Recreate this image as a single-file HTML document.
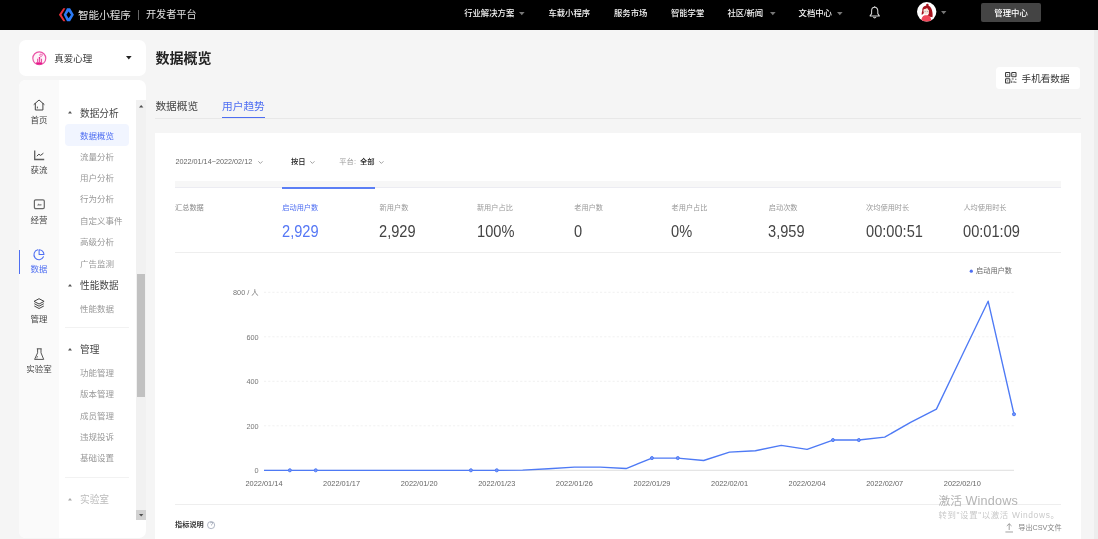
<!DOCTYPE html>
<html lang="zh-CN"><head><meta charset="utf-8"><title>数据概览</title>
<style>
*{box-sizing:border-box;margin:0;padding:0}
html,body{width:1098px;height:539px;overflow:hidden;background:#f5f5f5;font-family:"Liberation Sans","Noto Sans CJK SC",sans-serif;}
#root{position:relative;width:1098px;height:539px;overflow:hidden;will-change:transform}
.t{position:absolute;white-space:nowrap;line-height:1;transform:translateY(-50%)}
.b{position:absolute}
svg{position:absolute;overflow:visible}
</style></head><body><div id="root">

<div class="b" style="left:0;top:0;width:1098px;height:30px;background:#000"></div>
<svg style="left:58px;top:7.6px" width="17" height="13.6" viewBox="0 0 17 15" preserveAspectRatio="none">
<path d="M5.3 0.3 L0.9 7.5 L5.3 14.7 L7.4 14.7 L3.5 7.5 L7.4 0.3 Z" fill="#e8303a"/>
<path d="M9 0.3 H12.1 L15.9 7.5 L12.1 14.7 H9 L5.7 7.5 Z M10.6 3.8 L13 7.5 L10.6 11.3 L8.4 7.5 Z" fill="#2b7af6" fill-rule="evenodd"/>
</svg>
<div class="t" style="left:78px;top:14.6px;font-size:10.6px;color:#e0e0e0;font-weight:normal;">智能小程序</div>
<div class="b" style="left:138px;top:9.5px;width:1px;height:10px;background:#666"></div>
<div class="t" style="left:146px;top:14.6px;font-size:10.15px;color:#e0e0e0;font-weight:normal;">开发者平台</div>
<div class="t" style="left:464.2px;top:12.8px;font-size:8.35px;color:#f4f4f4;font-weight:500;">行业解决方案</div>
<svg style="left:519.1px;top:11.5px" width="5.6" height="3.4" viewBox="0 0 5 3"><path d="M0 0H5L2.5 3Z" fill="#777"/></svg>
<div class="t" style="left:548.4px;top:12.8px;font-size:8.35px;color:#f4f4f4;font-weight:500;">车载小程序</div>
<div class="t" style="left:614px;top:12.8px;font-size:8.35px;color:#f4f4f4;font-weight:500;">服务市场</div>
<div class="t" style="left:670.9px;top:12.8px;font-size:8.35px;color:#f4f4f4;font-weight:500;">智能学堂</div>
<div class="t" style="left:727.5px;top:12.8px;font-size:8.35px;color:#f4f4f4;font-weight:500;">社区/新闻</div>
<svg style="left:769.5px;top:11.5px" width="5.6" height="3.4" viewBox="0 0 5 3"><path d="M0 0H5L2.5 3Z" fill="#777"/></svg>
<div class="t" style="left:798.6px;top:12.8px;font-size:8.35px;color:#f4f4f4;font-weight:500;">文档中心</div>
<svg style="left:836.5px;top:11.5px" width="5.6" height="3.4" viewBox="0 0 5 3"><path d="M0 0H5L2.5 3Z" fill="#777"/></svg>
<svg style="left:869.1px;top:6.4px" width="11.4" height="13" viewBox="0 0 11 12.6">
<path d="M5.5 1.3 C3.5 1.3 2.5 2.9 2.5 4.8 L2.5 7.4 L1 9.6 L10 9.6 L8.5 7.4 L8.5 4.8 C8.5 2.9 7.5 1.3 5.5 1.3 Z" fill="none" stroke="#d8d8d8" stroke-width="1" stroke-linejoin="round"/>
<path d="M4.2 10.6 Q5.5 12.4 6.8 10.6" fill="none" stroke="#d8d8d8" stroke-width="1"/>
<path d="M5.5 0.3V1.3" stroke="#d8d8d8" stroke-width="1"/>
</svg>
<svg style="left:916.6px;top:2.3px" width="19.4" height="19.6" viewBox="0 0 20 20">
<defs><clipPath id="av"><circle cx="10" cy="10" r="10"/></clipPath></defs>
<circle cx="10" cy="10" r="10" fill="#fff"/>
<g clip-path="url(#av)">
<circle cx="10.7" cy="2.9" r="1.3" fill="#a5121c"/>
<path d="M10 3.6 C7 3.8 5.2 6 5.5 9 C5 10.5 4.6 12 5 13.4 L7 11.6 L7 8 L10.5 6.5 L12 8.5 L12.2 12 L10.4 14.6 L16 15.6 C16.6 12 15.6 7 13.6 4.8 C12.6 3.8 11.2 3.5 10 3.6Z" fill="#a5121c"/>
<path d="M6.7 7.6 L10.5 6.3 L11.9 8.4 L11.8 11 Q10.2 13.2 8.2 12.6 Q6.5 11.2 6.7 7.6Z" fill="#f5e2d6"/>
<path d="M4.2 20.4 Q4.4 14.6 8 13.6 L11.4 13.6 Q14.6 14.6 15 20.4Z" fill="#f0485a"/>
<circle cx="8.3" cy="9.6" r="0.5" fill="#6a7a8a"/><circle cx="10.6" cy="9.6" r="0.5" fill="#6a7a8a"/>
</g></svg>
<svg style="left:941px;top:11.2px" width="5.4" height="3.2" viewBox="0 0 5 3"><path d="M0 0H5L2.5 3Z" fill="#777"/></svg>
<div class="b" style="left:981px;top:3.2px;width:60px;height:19.2px;background:#444;border-radius:2px"></div>
<div class="t" style="left:994.3px;top:12.9px;font-size:8.4px;color:#fff;font-weight:500;">管理中心</div>
<div class="b" style="left:1094px;top:30px;width:4px;height:509px;background:#ededed"></div>
<div class="b" style="left:19px;top:40px;width:127px;height:35.5px;background:#fff;border-radius:7px"></div>
<svg style="left:31.5px;top:51px" width="14.6" height="14.6" viewBox="0 0 16 16">
<circle cx="8" cy="8" r="7.1" fill="#fef4f9" stroke="#ea55a7" stroke-width="1.3"/>
<path d="M4.6 12.4 H11.2 V14.2 Q8 15.6 4.6 14.2 Z" fill="#e6188a"/>
<path d="M5.6 8.6 H6.8 V12.4 H5.6 Z M7.5 7.6 H9 V12.4 H7.5 Z M9.8 8.4 H11 V12.4 H9.8 Z" fill="#ea4fa3"/>
<circle cx="8.2" cy="7.4" r="0.9" fill="#e6188a"/>
<path d="M9.8 6.4 C8.2 5.2 8.2 3.6 9.2 3.4 C9.6 3.3 9.9 3.6 9.9 3.9 C10 3.6 10.4 3.3 10.8 3.4 C11.8 3.8 11.4 5.4 9.8 6.4 Z" fill="none" stroke="#e8409b" stroke-width="0.8"/>
</svg>
<div class="t" style="left:54.2px;top:58.6px;font-size:9.5px;color:#333;font-weight:normal;">真爱心理</div>
<svg style="left:126.4px;top:56px" width="5.6" height="3.6" viewBox="0 0 5 3"><path d="M0 0H5L2.5 3Z" fill="#222"/></svg>
<div class="b" style="left:19px;top:80px;width:127px;height:458px;background:#fff;border-radius:7px;overflow:hidden">
<div class="b" style="left:0;top:0;width:40px;height:458px;background:#fafafa"></div>
</div>
<div class="b" style="left:19px;top:250px;width:1.3px;height:23.5px;background:#4e6ef2"></div>
<svg style="left:33px;top:98.5px" width="12" height="12" viewBox="0 0 12 12"><path d="M1 5.4 L6.05 1 L11.1 5.4 M2.3 4.5 V11 H9.9 V4.5" fill="none" stroke="#444" stroke-width="1" stroke-linejoin="round" stroke-linecap="round"/><path d="M4.4 7.6 V9.4" stroke="#444" stroke-width="0.9"/></svg>
<div class="t" style="left:30.5px;top:119.5px;font-size:8.5px;color:#444;font-weight:normal;">首页</div>
<svg style="left:33px;top:150px" width="12" height="11" viewBox="0 0 12 11"><path d="M1.7 0.6 V9.5 H11.2" fill="none" stroke="#444" stroke-width="1.3" stroke-opacity="0.85"/><path d="M3.8 6.2 L5.9 4.2 L7.6 5.4 L10.4 3.2" fill="none" stroke="#444" stroke-width="1" stroke-linejoin="round"/></svg>
<div class="t" style="left:30.5px;top:169.5px;font-size:8.5px;color:#444;font-weight:normal;">获流</div>
<svg style="left:33px;top:199px" width="12" height="11" viewBox="0 0 12 11"><rect x="1.4" y="0.8" width="9.9" height="8.8" rx="1.3" fill="none" stroke="#444" stroke-width="1.2" stroke-opacity="0.8"/><path d="M4 6.6 L5.6 4.6 L6.6 5.4 L8.4 5 V6.6 Z" fill="#444" fill-opacity="0.7"/></svg>
<div class="t" style="left:30.5px;top:220px;font-size:8.5px;color:#444;font-weight:normal;">经营</div>
<svg style="left:33px;top:248.5px" width="12" height="12" viewBox="0 0 12 12"><path d="M4.75 0.85 A5 5 0 1 0 10.48 7.81" fill="none" stroke="#4e6ef2" stroke-width="1.05" stroke-linecap="round"/><path d="M6.1 0.7 V5.55 H10.95 A4.85 4.85 0 0 0 6.1 0.7 Z" fill="none" stroke="#4e6ef2" stroke-width="1.05" stroke-linejoin="round"/></svg>
<div class="t" style="left:30.5px;top:269.1px;font-size:8.5px;color:#4e6ef2;font-weight:normal;">数据</div>
<svg style="left:33px;top:298px" width="12" height="12" viewBox="0 0 12 12"><path d="M6.05 0.7 L11.1 3.4 L6.05 6 L1 3.4 Z" fill="none" stroke="#444" stroke-width="1" stroke-linejoin="round"/><path d="M1.3 5.7 L6.05 8.2 L10.8 5.7 M1.3 8 L6.05 10.5 L10.8 8" fill="none" stroke="#444" stroke-width="1" stroke-linejoin="round"/></svg>
<div class="t" style="left:30.5px;top:319.3px;font-size:8.5px;color:#444;font-weight:normal;">管理</div>
<svg style="left:33px;top:347.5px" width="12" height="13" viewBox="0 0 12 13"><path d="M3.8 0.8 H8.65 M4.6 0.8 V4.8 L1.6 11.4 H10.7 L8 4.8 V0.8" fill="none" stroke="#444" stroke-width="1" stroke-linejoin="round" stroke-opacity="0.9"/><path d="M3.8 8.2 L5 8.8 M3.2 9.9 L4.6 9.9" stroke="#444" stroke-width="0.8" stroke-opacity="0.8"/></svg>
<div class="t" style="left:26.25px;top:369.3px;font-size:8.5px;color:#444;font-weight:normal;">实验室</div>
<svg style="left:68px;top:111.3px" width="4" height="2.4" viewBox="0 0 4 2.4"><path d="M0 2.4L2 0L4 2.4Z" fill="#555"/></svg>
<div class="t" style="left:80px;top:113.6px;font-size:9.7px;color:#444;font-weight:normal;">数据分析</div>
<div class="b" style="left:65px;top:124px;width:64px;height:21.5px;background:#f1f5ff;border-radius:4px"></div>
<div class="t" style="left:80px;top:135.5px;font-size:8.5px;color:#4e6ef2;font-weight:normal;">数据概览</div>
<div class="t" style="left:80px;top:156.7px;font-size:8.5px;color:#999;font-weight:normal;">流量分析</div>
<div class="t" style="left:80px;top:178px;font-size:8.5px;color:#999;font-weight:normal;">用户分析</div>
<div class="t" style="left:80px;top:199.4px;font-size:8.5px;color:#999;font-weight:normal;">行为分析</div>
<div class="t" style="left:80px;top:221px;font-size:8.5px;color:#999;font-weight:normal;">自定义事件</div>
<div class="t" style="left:80px;top:242.2px;font-size:8.5px;color:#999;font-weight:normal;">高级分析</div>
<div class="t" style="left:80px;top:263.5px;font-size:8.5px;color:#999;font-weight:normal;">广告监测</div>
<svg style="left:68px;top:284.3px" width="4" height="2.4" viewBox="0 0 4 2.4"><path d="M0 2.4L2 0L4 2.4Z" fill="#555"/></svg>
<div class="t" style="left:80px;top:286.4px;font-size:9.7px;color:#444;font-weight:normal;">性能数据</div>
<div class="t" style="left:80px;top:308.6px;font-size:8.5px;color:#999;font-weight:normal;">性能数据</div>
<div class="b" style="left:65px;top:327px;width:64px;height:1px;background:#f2f2f2"></div>
<svg style="left:68px;top:348.3px" width="4" height="2.4" viewBox="0 0 4 2.4"><path d="M0 2.4L2 0L4 2.4Z" fill="#555"/></svg>
<div class="t" style="left:80px;top:350.2px;font-size:9.7px;color:#444;font-weight:normal;">管理</div>
<div class="t" style="left:80px;top:373px;font-size:8.5px;color:#999;font-weight:normal;">功能管理</div>
<div class="t" style="left:80px;top:394.3px;font-size:8.5px;color:#999;font-weight:normal;">版本管理</div>
<div class="t" style="left:80px;top:415.6px;font-size:8.5px;color:#999;font-weight:normal;">成员管理</div>
<div class="t" style="left:80px;top:436.9px;font-size:8.5px;color:#999;font-weight:normal;">违规投诉</div>
<div class="t" style="left:80px;top:458.2px;font-size:8.5px;color:#999;font-weight:normal;">基础设置</div>
<div class="b" style="left:65px;top:477px;width:64px;height:1px;background:#f2f2f2"></div>
<svg style="left:68px;top:498.3px" width="4" height="2.4" viewBox="0 0 4 2.4"><path d="M0 2.4L2 0L4 2.4Z" fill="#aaa"/></svg>
<div class="t" style="left:80px;top:499.6px;font-size:9.7px;color:#bbb;font-weight:normal;">实验室</div>
<div class="b" style="left:136px;top:100px;width:10px;height:420px;background:#f1f1f1"></div>
<svg style="left:138.5px;top:104.5px" width="4.4" height="2.6" viewBox="0 0 4 2.4"><path d="M0 2.4L2 0L4 2.4Z" fill="#505050"/></svg>
<div class="b" style="left:137px;top:274px;width:7.5px;height:123px;background:#c1c1c1"></div>
<div class="b" style="left:136px;top:510px;width:10px;height:10px;background:#d2d2d2"></div>
<svg style="left:138.5px;top:514px" width="4.4" height="2.6" viewBox="0 0 4 2.4"><path d="M0 0L2 2.4L4 0Z" fill="#505050"/></svg>
<div class="t" style="left:155.4px;top:58px;font-size:14px;color:#222;font-weight:bold;">数据概览</div>
<div class="b" style="left:995.8px;top:66.7px;width:84.5px;height:22.7px;background:#fff;border-radius:3.5px"></div>
<svg style="left:1004.5px;top:72.3px" width="11.6" height="11.6" viewBox="0 0 12 12" fill="none" stroke="#383838" stroke-width="1.1">
<rect x="0.6" y="0.6" width="4.4" height="4.4" rx="0.6"/><rect x="7" y="0.6" width="4.4" height="4.4" rx="0.6"/><rect x="0.6" y="7" width="4.4" height="4.4" rx="0.6"/>
<path d="M2.8 2.2V3.4 M9.2 2.2V3.4 M2.8 8.6V9.8 M7 7.2H9 M7 9V11.4 M9.4 9.4V11.4 M11.2 7V8.2 M11.2 10V11.4" stroke-width="0.9"/>
</svg>
<div class="t" style="left:1021.6px;top:79.2px;font-size:9.6px;color:#333;font-weight:normal;">手机看数据</div>
<div class="t" style="left:155.4px;top:106.3px;font-size:10.7px;color:#444;font-weight:normal;">数据概览</div>
<div class="t" style="left:222px;top:106.3px;font-size:10.7px;color:#4e6ef2;font-weight:normal;">用户趋势</div>
<div class="b" style="left:155px;top:117.6px;width:926px;height:1px;background:#e8e8e8"></div>
<div class="b" style="left:222px;top:116.6px;width:42.6px;height:1.6px;background:#4e6ef2"></div>
<div class="b" style="left:155px;top:133px;width:926px;height:420px;background:#fff"></div>
<div class="t" style="left:175.4px;top:162.2px;font-size:7.25px;color:#666;font-weight:normal;">2022/01/14~2022/02/12</div>
<svg style="left:258.1px;top:160.7px" width="4.8" height="2.8" viewBox="0 0 4.8 2.8"><path d="M0.3 0.3L2.4 2.4L4.5 0.3" fill="none" stroke="#8a8a8a" stroke-width="0.8"/></svg>
<div class="t" style="left:291px;top:162.2px;font-size:7.3px;color:#222;font-weight:500;">按日</div>
<svg style="left:309.6px;top:160.7px" width="4.8" height="2.8" viewBox="0 0 4.8 2.8"><path d="M0.3 0.3L2.4 2.4L4.5 0.3" fill="none" stroke="#8a8a8a" stroke-width="0.8"/></svg>
<div class="t" style="left:339.3px;top:162.2px;font-size:7.3px;color:#999;font-weight:normal;">平台:</div>
<div class="t" style="left:360px;top:162.2px;font-size:7.3px;color:#222;font-weight:500;">全部</div>
<svg style="left:378.6px;top:160.7px" width="4.8" height="2.8" viewBox="0 0 4.8 2.8"><path d="M0.3 0.3L2.4 2.4L4.5 0.3" fill="none" stroke="#8a8a8a" stroke-width="0.8"/></svg>
<div class="b" style="left:175px;top:181px;width:885.5px;height:6.6px;background:#f7f7f7"></div>
<div class="b" style="left:175px;top:187.4px;width:885.5px;height:0.6px;background:#ececf2"></div>
<div class="b" style="left:282.3px;top:187.2px;width:92.3px;height:1.8px;background:#5c7ff5"></div>
<div class="t" style="left:175px;top:207.7px;font-size:7.2px;color:#888;font-weight:normal;">汇总数据</div>
<div class="t" style="left:282.3px;top:207.7px;font-size:7.2px;color:#4e6ef2;font-weight:normal;">启动用户数</div>
<div class="t" style="left:281.90000000000003px;top:231.1px;font-size:15px;color:#5577f5;font-weight:normal;transform-origin:0 50%;transform:translateY(-50%) scale(0.975,1.1);">2,929</div>
<div class="t" style="left:379.6px;top:207.7px;font-size:7.2px;color:#999;font-weight:normal;">新用户数</div>
<div class="t" style="left:379.20000000000005px;top:231.1px;font-size:15px;color:#444;font-weight:normal;transform-origin:0 50%;transform:translateY(-50%) scale(0.975,1.1);">2,929</div>
<div class="t" style="left:476.9px;top:207.7px;font-size:7.2px;color:#999;font-weight:normal;">新用户占比</div>
<div class="t" style="left:476.5px;top:231.1px;font-size:15px;color:#444;font-weight:normal;transform-origin:0 50%;transform:translateY(-50%) scale(0.975,1.1);">100%</div>
<div class="t" style="left:574.2px;top:207.7px;font-size:7.2px;color:#999;font-weight:normal;">老用户数</div>
<div class="t" style="left:573.8000000000001px;top:231.1px;font-size:15px;color:#444;font-weight:normal;transform-origin:0 50%;transform:translateY(-50%) scale(0.975,1.1);">0</div>
<div class="t" style="left:671.5px;top:207.7px;font-size:7.2px;color:#999;font-weight:normal;">老用户占比</div>
<div class="t" style="left:671.1px;top:231.1px;font-size:15px;color:#444;font-weight:normal;transform-origin:0 50%;transform:translateY(-50%) scale(0.975,1.1);">0%</div>
<div class="t" style="left:768.8px;top:207.7px;font-size:7.2px;color:#999;font-weight:normal;">启动次数</div>
<div class="t" style="left:768.4px;top:231.1px;font-size:15px;color:#444;font-weight:normal;transform-origin:0 50%;transform:translateY(-50%) scale(0.975,1.1);">3,959</div>
<div class="t" style="left:866.0999999999999px;top:207.7px;font-size:7.2px;color:#999;font-weight:normal;">次均使用时长</div>
<div class="t" style="left:865.6999999999999px;top:231.1px;font-size:15px;color:#444;font-weight:normal;transform-origin:0 50%;transform:translateY(-50%) scale(0.975,1.1);">00:00:51</div>
<div class="t" style="left:963.4000000000001px;top:207.7px;font-size:7.2px;color:#999;font-weight:normal;">人均使用时长</div>
<div class="t" style="left:963.0000000000001px;top:231.1px;font-size:15px;color:#444;font-weight:normal;transform-origin:0 50%;transform:translateY(-50%) scale(0.975,1.1);">00:01:09</div>
<div class="b" style="left:175px;top:252.2px;width:885.5px;height:0.8px;background:#eee"></div>
<svg style="left:0;top:0" width="1098" height="539" viewBox="0 0 1098 539">
<line x1="264.0" x2="1014" y1="425.80" y2="425.80" stroke="#e6e6e6" stroke-width="0.6" stroke-dasharray="2.1 2.1"/>
<line x1="264.0" x2="1014" y1="381.30" y2="381.30" stroke="#e6e6e6" stroke-width="0.6" stroke-dasharray="2.1 2.1"/>
<line x1="264.0" x2="1014" y1="336.80" y2="336.80" stroke="#e6e6e6" stroke-width="0.6" stroke-dasharray="2.1 2.1"/>
<line x1="264.0" x2="1014" y1="292.30" y2="292.30" stroke="#e6e6e6" stroke-width="0.6" stroke-dasharray="2.1 2.1"/>
<line x1="264.0" x2="1014" y1="470.3" y2="470.3" stroke="#d6d6d6" stroke-width="0.8"/>
<polyline points="264.00,470.30 289.86,470.30 315.72,470.30 341.59,470.30 367.45,470.30 393.31,470.30 419.17,470.30 445.03,470.30 470.90,470.30 496.76,470.30 522.62,470.08 548.48,468.74 574.34,467.19 600.21,467.19 626.07,468.52 651.93,458.06 677.79,458.06 703.66,460.51 729.52,452.06 755.38,450.72 781.24,445.38 807.10,449.38 832.97,440.04 858.83,440.04 884.69,437.15 910.55,422.46 936.41,409.11 962.28,355.05 988.14,301.20 1014.00,414.23" fill="none" stroke="#4e7af5" stroke-width="1.35" stroke-linejoin="round"/>
<circle cx="289.86" cy="470.30" r="1.55" fill="#7596f8" stroke="#4e7af5" stroke-width="1"/>
<circle cx="315.72" cy="470.30" r="1.55" fill="#7596f8" stroke="#4e7af5" stroke-width="1"/>
<circle cx="470.90" cy="470.30" r="1.55" fill="#7596f8" stroke="#4e7af5" stroke-width="1"/>
<circle cx="496.76" cy="470.30" r="1.55" fill="#7596f8" stroke="#4e7af5" stroke-width="1"/>
<circle cx="651.93" cy="458.06" r="1.55" fill="#7596f8" stroke="#4e7af5" stroke-width="1"/>
<circle cx="677.79" cy="458.06" r="1.55" fill="#7596f8" stroke="#4e7af5" stroke-width="1"/>
<circle cx="832.97" cy="440.04" r="1.55" fill="#7596f8" stroke="#4e7af5" stroke-width="1"/>
<circle cx="858.83" cy="440.04" r="1.55" fill="#7596f8" stroke="#4e7af5" stroke-width="1"/>
<circle cx="1014.00" cy="414.23" r="1.55" fill="#7596f8" stroke="#4e7af5" stroke-width="1"/>
<circle cx="971.3" cy="271.2" r="1.6" fill="#4e6ef2"/>
</svg>
<div class="t" style="right:839.4px;top:471.1px;font-size:7.3px;color:#777;font-weight:normal;">0</div>
<div class="t" style="right:839.4px;top:426.6px;font-size:7.3px;color:#777;font-weight:normal;">200</div>
<div class="t" style="right:839.4px;top:382.1px;font-size:7.3px;color:#777;font-weight:normal;">400</div>
<div class="t" style="right:839.4px;top:337.6px;font-size:7.3px;color:#777;font-weight:normal;">600</div>
<div class="t" style="right:839.4px;top:293.1px;font-size:7.3px;color:#777;font-weight:normal;">800 / 人</div>
<div class="t" style="left:234.00px;width:60px;text-align:center;top:483.6px;font-size:7.4px;color:#666">2022/01/14</div>
<div class="t" style="left:311.59px;width:60px;text-align:center;top:483.6px;font-size:7.4px;color:#666">2022/01/17</div>
<div class="t" style="left:389.17px;width:60px;text-align:center;top:483.6px;font-size:7.4px;color:#666">2022/01/20</div>
<div class="t" style="left:466.76px;width:60px;text-align:center;top:483.6px;font-size:7.4px;color:#666">2022/01/23</div>
<div class="t" style="left:544.34px;width:60px;text-align:center;top:483.6px;font-size:7.4px;color:#666">2022/01/26</div>
<div class="t" style="left:621.93px;width:60px;text-align:center;top:483.6px;font-size:7.4px;color:#666">2022/01/29</div>
<div class="t" style="left:699.52px;width:60px;text-align:center;top:483.6px;font-size:7.4px;color:#666">2022/02/01</div>
<div class="t" style="left:777.10px;width:60px;text-align:center;top:483.6px;font-size:7.4px;color:#666">2022/02/04</div>
<div class="t" style="left:854.69px;width:60px;text-align:center;top:483.6px;font-size:7.4px;color:#666">2022/02/07</div>
<div class="t" style="left:932.28px;width:60px;text-align:center;top:483.6px;font-size:7.4px;color:#666">2022/02/10</div>
<div class="t" style="left:976px;top:271.2px;font-size:7.2px;color:#666;font-weight:normal;">启动用户数</div>
<div class="b" style="left:175px;top:504px;width:885.5px;height:0.8px;background:#eee"></div>
<div class="t" style="left:175px;top:524.6px;font-size:7.2px;color:#3a3a3a;font-weight:bold;">指标说明</div>
<svg style="left:207.4px;top:520.6px" width="8.2" height="8.2" viewBox="0 0 8 8"><circle cx="4" cy="4" r="3.5" fill="none" stroke="#8a93a6" stroke-width="0.65"/></svg>
<div class="t" style="left:209.9px;top:524.9px;font-size:5.8px;color:#8a93a6;font-weight:normal;">?</div>
<div class="t" style="left:938.4px;top:500.6px;font-size:12.6px;color:#b4b4b4;font-weight:normal;"><span style="font-size:11.8px">激活</span> <span style="letter-spacing:0.22px">Windows</span></div>
<div class="t" style="left:938.4px;top:515px;font-size:8.4px;color:#c9c9c9;font-weight:normal;letter-spacing:0.66px;">转到"设置"以激活 Windows。</div>
<svg style="left:1004.6px;top:522.6px" width="8.4" height="9.6" viewBox="0 0 8.4 9.6"><path d="M4.2 0.8V7 M1.8 3L4.2 0.7L6.6 3 M0.4 9H8" fill="none" stroke="#7a7a7a" stroke-width="0.7"/></svg>
<div class="t" style="left:1018.2px;top:528px;font-size:7.2px;color:#858585;font-weight:normal;">导出CSV文件</div>
</div></body></html>
